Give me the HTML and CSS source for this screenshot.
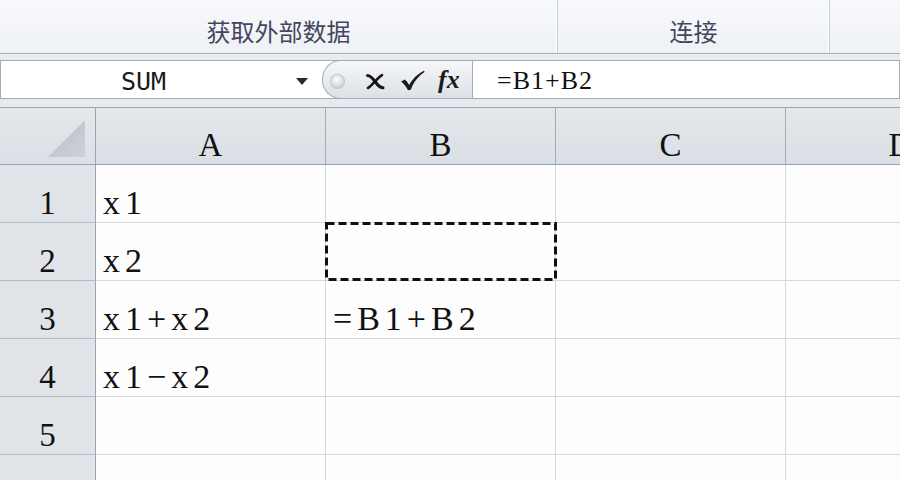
FILE: index.html
```html
<!DOCTYPE html>
<html lang="zh-CN">
<head>
<meta charset="utf-8">
<title>SUM</title>
<link rel="stylesheet" href="styles.css">
</head>
<body>
<div class="app">
  <div class="ribbon">
    <div class="group g1"><span>获取外部数据</span></div>
    <div class="group g2"><span>连接</span></div>
    <div class="group g3"></div>
  </div>

  <div class="fbar-wrap">
    <div class="fbar">
      <div class="namebox">
        <span class="name">SUM</span>
        <span class="dd"></span>
      </div>
      <div class="pill">
        <span class="dot"></span>
        <svg class="ico-x" width="20" height="17" viewBox="0 0 20 17">
          <path d="M2.5 2.5 C5 2.5 7 4.5 10 8.5 C13 12.5 15 15 18 14.8" fill="none" stroke="#151515" stroke-width="3" stroke-linecap="round"/>
          <path d="M17 2.2 C14 4 12 6.5 10 8.5 C7.5 11 5 14 3 15" fill="none" stroke="#151515" stroke-width="2.6" stroke-linecap="round"/>
        </svg>
        <svg class="ico-check" width="25" height="21" viewBox="0 0 25 21">
          <path d="M1 11.5 L5 9.5 C6.5 11 8 13 9.2 15 C13 8.5 17.5 4 24 0.8 L24.6 2 C18.5 6 14 11.5 10.8 19.8 L8 20.2 C6 16.5 3.8 13.5 1 11.5 Z" fill="#1c1c1c"/>
        </svg>
        <span class="fx"><i>f</i><i>x</i></span>
      </div>
      <div class="formula">=B1+B2</div>
    </div>
  </div>

  <div class="sheet">
    <div class="corner">
      <svg width="38" height="38" viewBox="0 0 38 38">
        <defs>
          <linearGradient id="cg" x1="0" y1="0" x2="1" y2="1">
            <stop offset="0" stop-color="#b9bec5"/>
            <stop offset="1" stop-color="#cdd2d8"/>
          </linearGradient>
        </defs>
        <polygon points="37,0 37,37 0,37" fill="url(#cg)"/>
      </svg>
    </div>
    <div class="h">A</div>
    <div class="h">B</div>
    <div class="h">C</div>
    <div class="h">D</div>

    <div class="rh">1</div>
    <div class="c">x1</div>
    <div class="c"></div>
    <div class="c"></div>
    <div class="c"></div>

    <div class="rh">2</div>
    <div class="c">x2</div>
    <div class="c copy">
      <svg class="marquee" width="232" height="59" viewBox="0 0 232 59">
        <rect x="1.5" y="1.5" width="229" height="56" fill="none" stroke="#111" stroke-width="3" stroke-dasharray="8 4"/>
      </svg>
    </div>
    <div class="c"></div>
    <div class="c"></div>

    <div class="rh">3</div>
    <div class="c">x1+x2</div>
    <div class="c">=B1+B2</div>
    <div class="c"></div>
    <div class="c"></div>

    <div class="rh">4</div>
    <div class="c">x1−x2</div>
    <div class="c"></div>
    <div class="c"></div>
    <div class="c"></div>

    <div class="rh">5</div>
    <div class="c"></div>
    <div class="c"></div>
    <div class="c"></div>
    <div class="c"></div>

    <div class="rh">6</div>
    <div class="c"></div>
    <div class="c"></div>
    <div class="c"></div>
    <div class="c"></div>
  </div>
</div>
</body>
</html>
```

FILE: styles.css
```css
* {
  box-sizing: border-box;
}

html, body {
  margin: 0;
  padding: 0;
}

body {
  width: 900px;
  height: 480px;
  overflow: hidden;
  background: #e6e9ee;
}

.app {
  width: 900px;
  height: 480px;
  overflow: hidden;
  display: flex;
  flex-direction: column;
}

/* ---------- ribbon ---------- */
.ribbon {
  display: flex;
  height: 54px;
  flex: none;
  border-bottom: 1px solid #a9b0ba;
  background: linear-gradient(#f8f9fb, #eef1f5);
}

.group {
  display: flex;
  align-items: center;
  justify-content: center;
  padding-top: 8px;
  border-right: 1px solid #c8cdd5;
  box-shadow: inset -1px 0 0 #ffffff;
  font-family: "Noto Sans CJK SC", "Noto Sans", sans-serif;
  font-size: 24px;
  font-weight: 400;
  color: #44465e;
  line-height: 1;
}

.g1 { width: 558px; }
.g2 { width: 272px; }
.g3 { flex: 1; border-right: none; box-shadow: none; }

/* ---------- formula bar ---------- */
.fbar-wrap {
  flex: none;
  padding: 6px 0 8px 0;
  background: #e7eaef;
}

.fbar {
  display: flex;
  height: 39px;
}

.namebox {
  width: 342px;
  flex: none;
  display: flex;
  align-items: center;
  background: #fff;
  border: 1px solid #a3aab4;
  border-right: none;
}

.name {
  width: 285px;
  text-align: center;
  padding-top: 3px;
  font-family: "DejaVu Sans Mono", "Liberation Mono", monospace;
  font-size: 25px;
  color: #1a1a1a;
  line-height: 1;
}

.dd {
  width: 0;
  height: 0;
  margin-left: 10px;
  margin-top: 3px;
  border-left: 6px solid transparent;
  border-right: 6px solid transparent;
  border-top: 7px solid #2b2b2b;
}

.pill {
  width: 150px;
  flex: none;
  margin-left: -20px;
  display: flex;
  align-items: center;
  padding-left: 7px;
  border: 1px solid #a3aab4;
  border-right: none;
  border-radius: 19px 0 0 19px;
  background: linear-gradient(#f6f7f9, #e7eaee 55%, #dde1e6);
}

.dot {
  width: 15px;
  height: 15px;
  margin-top: 3px;
  border-radius: 50%;
  background: radial-gradient(circle at 45% 35%, #ffffff 0%, #dfe2e6 40%, #b3b9c0 100%);
  box-shadow: inset 0 0 0 1px #c4c9cf;
}

.ico-x {
  margin-left: 20px;
  margin-top: 3px;
}

.ico-check {
  margin-left: 15px;
  margin-top: 1px;
}

.fx {
  margin-left: 13px;
  font-family: "Liberation Serif", "DejaVu Serif", serif;
  font-size: 26px;
  font-weight: bold;
  color: #1c1c1c;
  line-height: 1;
  white-space: nowrap;
}

.formula {
  flex: 1;
  display: flex;
  align-items: center;
  padding-left: 24px;
  padding-top: 2px;
  background: #fff;
  border: 1px solid #a3aab4;
  font-family: "Liberation Serif", "Times New Roman", serif;
  font-size: 26px;
  letter-spacing: 1px;
  color: #111;
  line-height: 1;
}

/* ---------- sheet ---------- */
.sheet {
  flex: none;
  display: grid;
  grid-template-columns: 96px repeat(4, 230px);
  grid-template-rows: 57px repeat(6, 58px);
  border-top: 1px solid #9ea6b1;
  background: #fdfdfe;
  font-family: "Liberation Serif", "Times New Roman", serif;
  font-size: 34px;
  color: #111;
  line-height: 36px;
}

.corner {
  display: flex;
  justify-content: flex-end;
  align-items: flex-end;
  padding: 0 9px 6px 0;
  background: linear-gradient(#e4e8ec, #dce0e6);
  border-right: 1px solid #9aa3ae;
  border-bottom: 1px solid #9aa3ae;
}

.h {
  display: flex;
  justify-content: center;
  align-items: flex-end;
  padding-bottom: 1px;
  background: linear-gradient(#e4e8ec, #dadfe5);
  border-right: 1px solid #a3abb6;
  border-bottom: 1px solid #9aa3ae;
  font-size: 33px;
}

.rh {
  display: flex;
  justify-content: center;
  align-items: flex-end;
  padding-bottom: 1px;
  background: #e0e4e9;
  border-right: 1px solid #9aa3ae;
  border-bottom: 1px solid #b4bbc4;
  font-size: 33px;
}

.c {
  display: flex;
  align-items: flex-end;
  padding: 0 0 1px 7px;
  border-right: 1px solid #d3d8df;
  border-bottom: 1px solid #d3d8df;
  letter-spacing: 5px;
  white-space: nowrap;
}

.copy {
  position: relative;
}

.marquee {
  position: absolute;
  left: -1px;
  top: -1px;
}
```
